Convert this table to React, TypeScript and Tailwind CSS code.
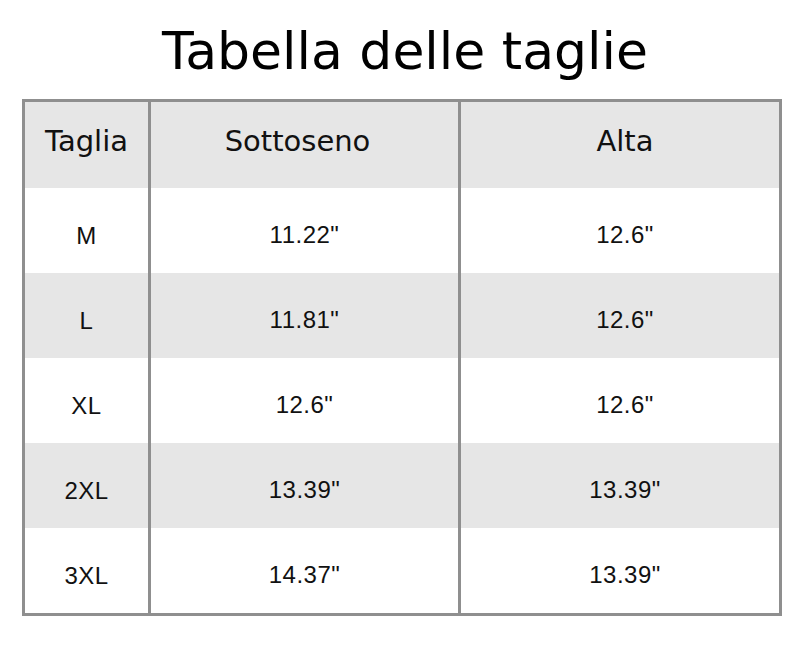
import React from "react";

const rows = [
  ["M", "11.22\"", "12.6\""],
  ["L", "11.81\"", "12.6\""],
  ["XL", "12.6\"", "12.6\""],
  ["2XL", "13.39\"", "13.39\""],
  ["3XL", "14.37\"", "13.39\""],
];

export default function App() {
  return (
    <div className="w-[800px] h-[650px] bg-white pt-[21px]">
      <h1 className="text-center text-[52px] leading-[60px] text-black font-['DejaVu_Sans',sans-serif] pl-[10px]">
        Tabella delle taglie
      </h1>
      <div className="ml-[22px] mt-[18px] w-[760px] border-[3px] border-[#8f8f8f]">
        <div className="grid grid-cols-[123px_313px_1fr] h-[86px] bg-[#e6e6e6] text-[29px] text-[#111] font-['DejaVu_Sans',sans-serif]">
          <div className="flex items-center justify-center pb-[6px]">Taglia</div>
          <div className="flex items-center justify-center border-l-[3px] border-r-[3px] border-[#8f8f8f] pb-[6px] pr-[14px]">Sottoseno</div>
          <div className="flex items-center justify-center pb-[6px] pl-[10px]">Alta</div>
        </div>
        {rows.map((r, i) => (
          <div
            key={r[0]}
            className={`grid grid-cols-[123px_313px_1fr] h-[85px] text-[24px] text-[#111] font-['Liberation_Sans',Arial,sans-serif] tracking-[0.5px] ${i % 2 === 1 ? "bg-[#e6e6e6]" : "bg-white"}`}
          >
            <div className="flex items-center justify-center pt-[10px]">{r[0]}</div>
            <div className="flex items-center justify-center border-l-[3px] border-r-[3px] border-[#8f8f8f] pt-[8px]">{r[1]}</div>
            <div className="flex items-center justify-center pt-[8px] pl-[10px]">{r[2]}</div>
          </div>
        ))}
      </div>
    </div>
  );
}
